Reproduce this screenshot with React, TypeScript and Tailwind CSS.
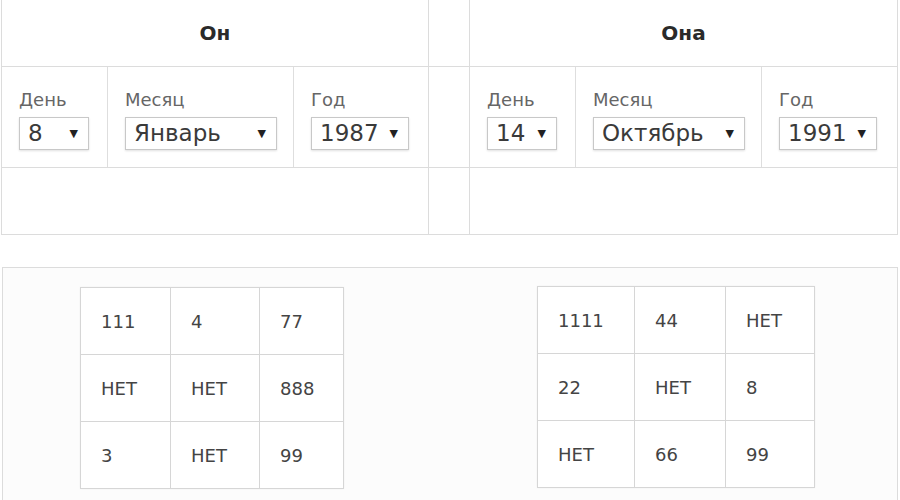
const font = "font-['DejaVu_Sans',Verdana,sans-serif]";

function FakeSelect({ value, width }: { value: string; width: string }) {
  return (
    <div
      className={`${width} h-[33px] flex items-center justify-between pl-[8px] pr-[10px] bg-white border border-[#c8c8c8] shadow-[0_1px_2px_rgba(0,0,0,0.12)] text-[23px] text-[#3a3a3a] leading-none`}
    >
      <span>{value}</span>
      <span className="text-[11px] text-[#222]">▼</span>
    </div>
  );
}

function Field({
  label,
  value,
  cell,
  sel,
  last,
}: {
  label: string;
  value: string;
  cell: string;
  sel: string;
  last?: boolean;
}) {
  return (
    <div
      className={`${cell} h-full flex flex-col justify-center pl-[17px] pt-[4px] ${last ? "" : "border-r border-[#dedede]"}`}
    >
      <div className="text-[18px] text-[#666] leading-[24px] mb-[5px]">{label}</div>
      <FakeSelect value={value} width={sel} />
    </div>
  );
}

function Person({ day, month, year }: { day: string; month: string; year: string }) {
  return (
    <div className="flex h-full">
      <Field label="День" value={day} cell="w-[106px]" sel="w-[70px]" />
      <Field label="Месяц" value={month} cell="w-[186px]" sel="w-[152px]" />
      <Field label="Год" value={year} cell="flex-1" sel="w-[98px]" last />
    </div>
  );
}

function Square({ rows, cols }: { rows: string[][]; cols: string[] }) {
  return (
    <div className="border-t border-l border-[#d6d6d6] bg-white shadow-[0_0_2px_rgba(0,0,0,0.05)]">
      {rows.map((r, i) => (
        <div key={i} className="flex">
          {r.map((c, j) => (
            <div
              key={j}
              className={`${cols[j]} h-[67px] flex items-center pl-[20px] border-r border-b border-[#d6d6d6] text-[18px] text-[#444]`}
            >
              {c}
            </div>
          ))}
        </div>
      ))}
    </div>
  );
}

export default function App() {
  const cell = "border-r border-b border-[#dcdcdc]";
  return (
    <div className={`w-[900px] h-[500px] bg-white overflow-hidden ${font}`}>
      {/* top form table */}
      <div className="ml-[1px] w-[897px] grid grid-cols-[427px_41px_428px] grid-rows-[67px_101px_67px] border-l border-[#dcdcdc]">
        <div className={`${cell} flex items-center justify-center font-bold text-[20px] text-[#2a2a2a]`}>Он</div>
        <div className={cell}></div>
        <div className={`${cell} flex items-center justify-center font-bold text-[20px] text-[#2a2a2a]`}>Она</div>

        <div className={cell}>
          <Person day="8" month="Январь" year="1987" />
        </div>
        <div className={cell}></div>
        <div className={cell}>
          <Person day="14" month="Октябрь" year="1991" />
        </div>

        <div className={cell}></div>
        <div className={cell}></div>
        <div className={cell}></div>
      </div>

      {/* results */}
      <div className="mt-[32px] ml-[2px] w-[896px] h-[260px] border border-[#dcdcdc] bg-[#fcfcfc] flex items-start pt-[19px]">
        <div className="ml-[77px]">
          <Square
            cols={["w-[90px]", "w-[89px]", "w-[84px]"]}
            rows={[
              ["111", "4", "77"],
              ["НЕТ", "НЕТ", "888"],
              ["3", "НЕТ", "99"],
            ]}
          />
        </div>
        <div className="ml-[193px] -mt-[1px]">
          <Square
            cols={["w-[97px]", "w-[91px]", "w-[89px]"]}
            rows={[
              ["1111", "44", "НЕТ"],
              ["22", "НЕТ", "8"],
              ["НЕТ", "66", "99"],
            ]}
          />
        </div>
      </div>
    </div>
  );
}
